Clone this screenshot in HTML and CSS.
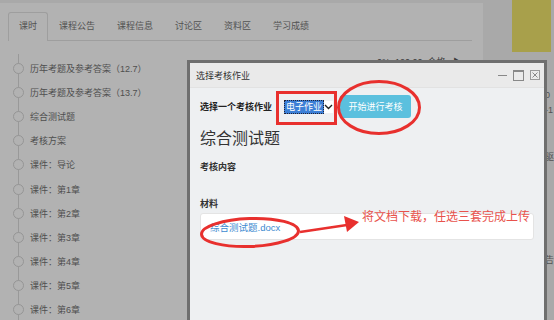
FILE: index.html
```html
<!DOCTYPE html>
<html lang="zh-CN">
<head>
  <meta charset="UTF-8" />
  <title>课时</title>
  <link rel="stylesheet" href="styles.css">
</head>
<body>
  <div class="page">
    <div class="main">
      <div class="tabs">
        <div class="tab active">课时</div>
        <div class="tab">课程公告</div>
        <div class="tab">课程信息</div>
        <div class="tab">讨论区</div>
        <div class="tab">资料区</div>
        <div class="tab">学习成绩</div>
      </div>
      <ul class="timeline">
        <li>历年考题及参考答案（12.7）<span class="info">0%&nbsp;&nbsp;120:00&nbsp;&nbsp;合格&nbsp;&nbsp;&nbsp;▶</span></li>
        <li>历年考题及参考答案（13.7）</li>
        <li>综合测试题</li>
        <li>考核方案</li>
        <li>课件：导论</li>
        <li>课件：第1章</li>
        <li>课件：第2章</li>
        <li>课件：第3章</li>
        <li>课件：第4章</li>
        <li>课件：第5章</li>
        <li>课件：第6章</li>
      </ul>
    </div>
    <div class="side">
      <div class="banner"></div>
      <div class="side-list">
        <div class="side-row r1">0</div>
        <div class="side-row r2">-1</div>
        <div class="side-row r3">驱</div>
        <div class="side-row r4">告</div>
      </div>
    </div>
  </div>

  <div class="mask"></div>

  <div class="dialog">
    <div class="dialog-head">
      <span>选择考核作业</span>
      <div class="controls">
        <span class="min"></span>
        <span class="max"></span>
        <span class="close">
          <svg width="10" height="10" viewBox="0 0 10 10"><rect x="0.5" y="0.5" width="9" height="9" fill="none" stroke="#999"/><path d="M2.5 2.5 L7.5 7.5 M7.5 2.5 L2.5 7.5" stroke="#888" stroke-width="1"/></svg>
        </span>
      </div>
    </div>
    <div class="dialog-body">
      <div class="pick">
        <b>选择一个考核作业</b>
        <div class="select">
          <span class="sel-text">电子作业</span>
          <svg width="9" height="9" viewBox="0 0 9 9"><path d="M1 3 L4.5 6.5 L8 3" fill="none" stroke="#222" stroke-width="1.4"/></svg>
        </div>
        <button class="start">开始进行考核</button>
      </div>
      <h1>综合测试题</h1>
      <div class="label">考核内容</div>
      <div class="label mat">材料</div>
      <div class="file"><a href="#">综合测试题.docx</a></div>
    </div>
  </div>

  <svg class="marks" width="554" height="320" viewBox="0 0 554 320">
    <rect x="277.5" y="92.5" width="58" height="31" fill="none" stroke="#e8302e" stroke-width="3"/>
    <ellipse cx="379" cy="107.5" rx="40.5" ry="26" fill="none" stroke="#e8302e" stroke-width="3"/>
    <ellipse cx="250" cy="232.5" rx="48.5" ry="14" fill="none" stroke="#e8302e" stroke-width="3" transform="rotate(-2 250 232.5)"/>
    <line x1="300" y1="232" x2="347" y2="225" stroke="#e8302e" stroke-width="2.5"/>
    <polygon points="359,222 344,216 347,232" fill="#e8302e"/>
  </svg>
  <div class="note">将文档下载，任选三套完成上传</div>
</body>
</html>
```

FILE: styles.css
```css
body {
  margin: 0;
  background-color: #f2f2f2;
  font-family: "Liberation Sans", "Noto Sans CJK SC", sans-serif;
  overflow: hidden;
  height: 320px;
}
.page {
  display: flex;
  height: 320px;
}
.main {
  width: 467px;
  margin-top: 3px;
  padding: 9px 11px 0 8px;
  background-color: #fff;
}
.tabs {
  display: flex;
  border-bottom: 1px solid #e2e2e2;
}
.tab {
  height: 27px;
  line-height: 27px;
  padding: 0 10px;
  border: 1px solid transparent;
  border-bottom: none;
  font-size: 9px;
  color: #777;
}
.tab.active {
  border-color: #e2e2e2;
  border-radius: 3px 3px 0 0;
  margin-bottom: -1px;
  background-color: #fff;
  height: 28px;
}
.timeline {
  list-style: none;
  margin: 13px 0 0;
  padding: 2px 0 0;
  background: linear-gradient(#dcdcdc, #dcdcdc) no-repeat 10px 0 / 1px 100%;
}
.timeline li {
  display: flex;
  align-items: center;
  height: 24.2px;
  font-size: 9px;
  color: #727272;
}
.timeline li::before {
  content: "";
  width: 9px;
  height: 9px;
  margin: 0 6px 0 5px;
  border: 1px solid #d6d6d6;
  border-radius: 50%;
  background-color: #fff;
}
.info {
  margin-left: auto;
  padding-right: 10px;
  align-self: flex-start;
  line-height: 12px;
  color: #555;
}
.side {
  flex: 1;
}
.banner {
  width: 39px;
  height: 52px;
  margin-left: 29px;
  background-color: #f1e66c;
}
.side-list {
  padding-left: 62px;
  font-size: 9px;
  color: #777;
  white-space: nowrap;
}
.side-row {
  height: 12px;
  line-height: 12px;
}
.r1 { margin-top: 37px; }
.r2 { margin-top: 3px; }
.r3 { margin-top: 35px; }
.r4 { margin-top: 91px; }
.mask {
  position: fixed;
  inset: 0;
  background-color: rgba(0, 0, 0, 0.3);
  z-index: 10;
}
.dialog {
  position: absolute;
  left: 187px;
  top: 60px;
  width: 354px;
  height: 257px;
  border: 3px solid #6f6f6f;
  border-bottom: none;
  background-color: #eef0f2;
  z-index: 20;
}
.dialog-head {
  display: flex;
  align-items: center;
  justify-content: space-between;
  height: 24px;
  padding: 0 4px 0 6px;
  background-color: #eaeaea;
  border-bottom: 1px solid #e2e2e2;
  font-size: 9px;
  color: #333;
}
.controls {
  display: flex;
  align-items: center;
  gap: 6px;
}
.min {
  width: 9px;
  height: 1px;
  background-color: #888;
}
.max {
  width: 9px;
  height: 8px;
  border: 1px solid #888;
  border-top-width: 2px;
}
.close {
  display: flex;
}
.dialog-body {
  padding: 7px 10px 0;
}
.pick {
  display: flex;
  align-items: center;
  height: 23px;
  font-size: 9px;
  color: #222;
}
.select {
  display: flex;
  align-items: center;
  height: 12px;
  margin-left: 12px;
  background-color: #fff;
}
.sel-text {
  padding: 0 1px;
  line-height: 12px;
  background-color: #3c7fd6;
  color: #fff;
  border: 1px dotted #223;
}
.start {
  height: 23px;
  width: 71px;
  margin-left: 7px;
  padding: 0;
  border: none;
  border-radius: 3px;
  background-color: #5bc0de;
  color: #fff;
  font-family: inherit;
  font-size: 9px;
}
h1 {
  margin: 11px 0 0;
  font-size: 16px;
  line-height: 20px;
  font-weight: normal;
  color: #333;
}
.label {
  margin-top: 11px;
  font-size: 9px;
  font-weight: bold;
  line-height: 14px;
  color: #333;
}
.label.mat {
  margin-top: 23px;
}
.file {
  height: 25px;
  margin-top: 2px;
  padding-left: 9px;
  display: flex;
  align-items: center;
  background-color: #fff;
  border: 1px solid #e4e4e4;
  border-radius: 3px;
}
.file a {
  font-size: 9.5px;
  color: #3d8ad0;
  text-decoration: none;
}
.marks {
  position: absolute;
  left: 0;
  top: 0;
  z-index: 30;
}
.note {
  position: absolute;
  left: 362px;
  top: 209px;
  z-index: 30;
  font-size: 12px;
  line-height: 16px;
  color: #e8524c;
  white-space: nowrap;
}
```
